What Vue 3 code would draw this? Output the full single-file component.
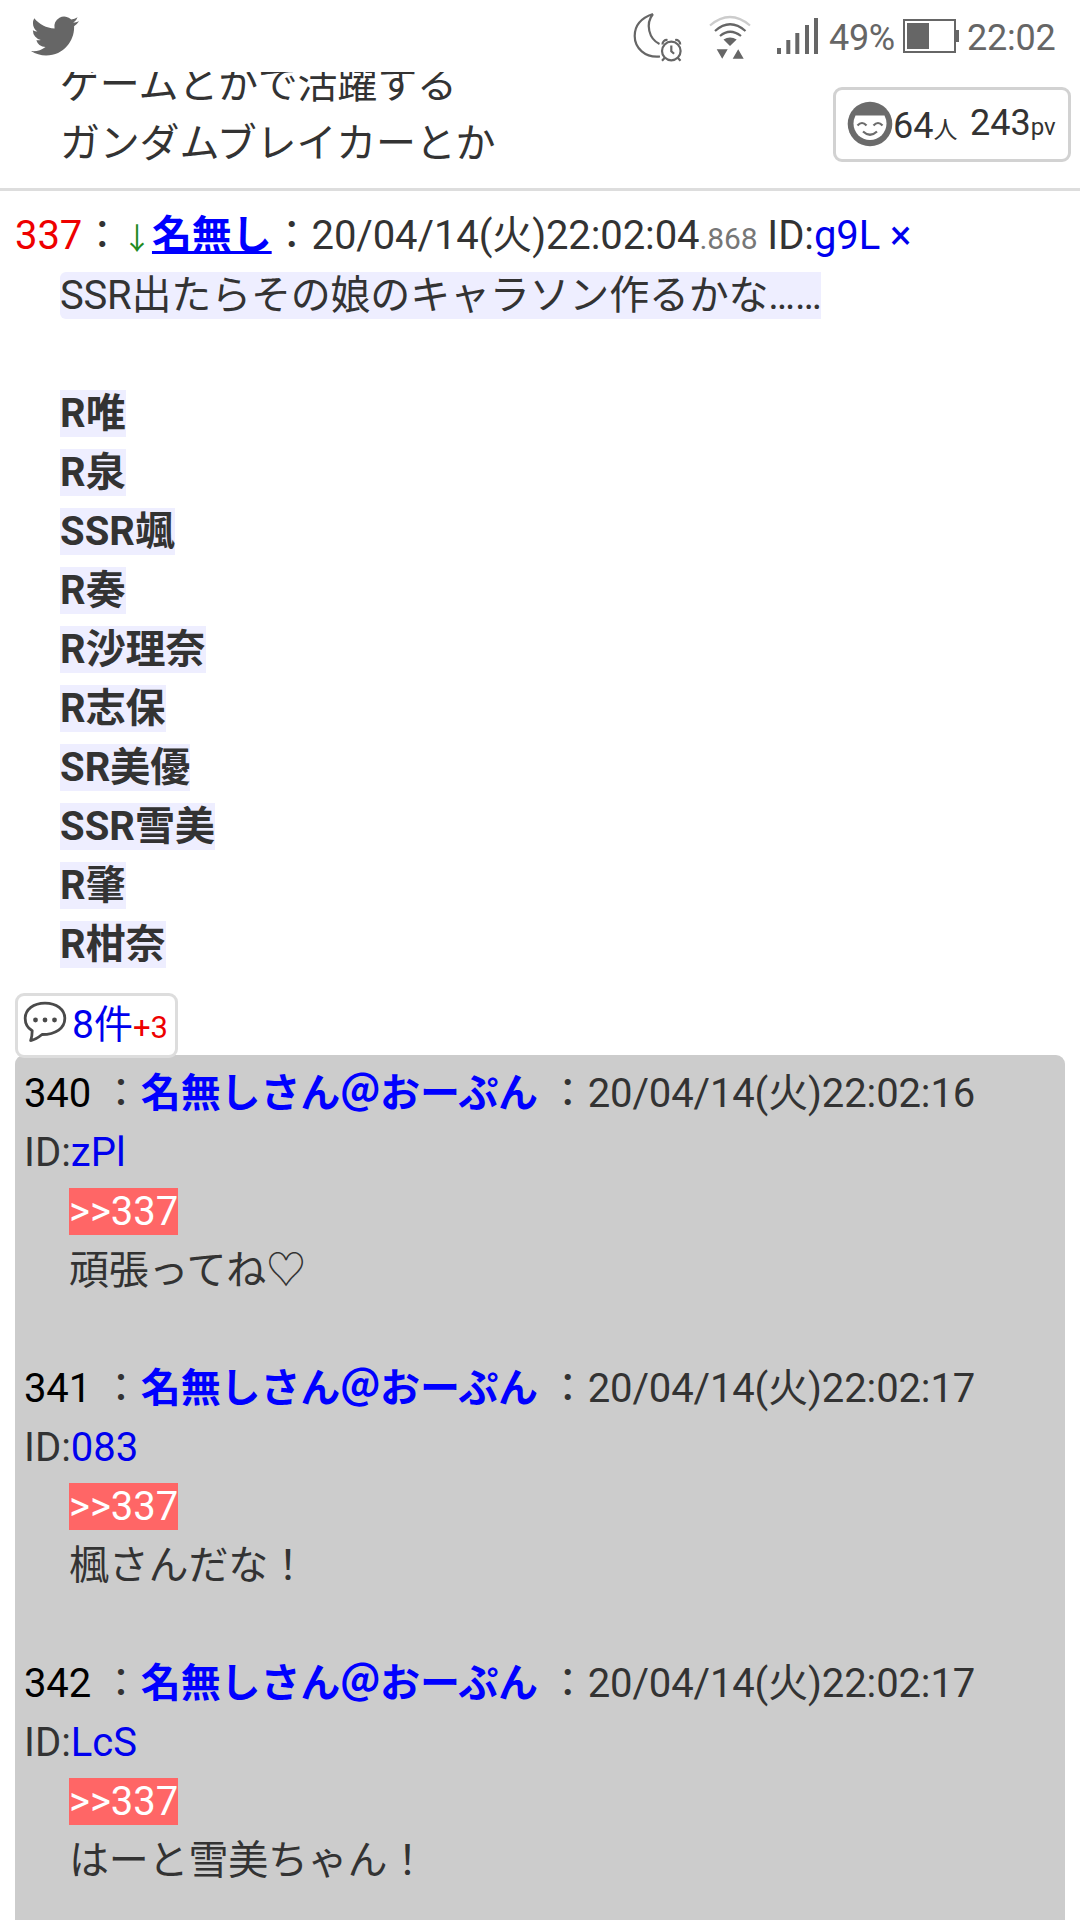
<script setup>
const picks = ['R唯', 'R泉', 'SSR颯', 'R奏', 'R沙理奈', 'R志保', 'SR美優', 'SSR雪美', 'R肇', 'R柑奈']

const replies = [
  { no: 340, time: '22:02:16', id: 'zPl', body: '頑張ってね♡' },
  { no: 341, time: '22:02:17', id: '083', body: '楓さんだな！' },
  { no: 342, time: '22:02:17', id: 'LcS', body: 'はーと雪美ちゃん！' },
]
</script>

<template>
  <div class="screen" lang="ja">
    <header class="status">
      <svg class="bird" viewBox="0 0 24 24" width="48" height="48">
        <path fill="#666" d="M23.953 4.57a10 10 0 01-2.825.775 4.958 4.958 0 002.163-2.723c-.951.555-2.005.959-3.127 1.184a4.92 4.92 0 00-8.384 4.482C7.69 8.095 4.067 6.13 1.64 3.162a4.822 4.822 0 00-.666 2.475c0 1.71.87 3.213 2.188 4.096a4.904 4.904 0 01-2.228-.616v.06a4.923 4.923 0 003.946 4.827 4.996 4.996 0 01-2.212.085 4.936 4.936 0 004.604 3.417 9.867 9.867 0 01-6.102 2.105c-.39 0-.779-.023-1.17-.067a13.995 13.995 0 007.557 2.209c9.053 0 13.998-7.496 13.998-13.985 0-.21 0-.42-.015-.63A9.935 9.935 0 0024 4.59z" />
      </svg>
      <svg class="indicators" viewBox="0 0 190 72" width="190" height="72" fill="none" stroke="#666" stroke-width="2.2">
        <!-- moon with alarm clock -->
        <path d="M23 14C11 18 4.700 26 4.700 36C4.700 48 15 58 30 56.500M23 14C15 24 19 39 29.500 44" />
        <circle cx="41.300" cy="51" r="9.300" />
        <path d="M32.500 44.500a4.300 4.300 0 0 1 5-4.500M50.200 44.500a4.300 4.300 0 0 0-5-4.500M35 57.500l-3 3.200M47.500 57.500l3 3.200M41.300 45.500v5.800l2.800 2.500" />
        <!-- wifi -->
        <path d="M80 25.500Q100 8.500 120 25.500" stroke="#ccc" />
        <path d="M85 31Q100 17.500 115.500 31M90 36Q100 27.500 111 36" />
        <path d="M93.500 39.500Q100 35.500 106.700 39.500L100 46zM86.700 49.300h11l-5.500 9.400zM102.700 58.700h11l-5.500-9.400z" fill="#666" stroke="none" />
        <!-- signal -->
        <path d="M147 48h4v6h-4zM156.300 40h4v14h-4zM165.300 33h4v21h-4zM175 25h4v29h-4zM184 18h4v36h-4z" fill="#666" stroke="none" />
      </svg>
      <span class="percent">49%</span>
      <svg class="battery" viewBox="0 0 56 34" width="56" height="34">
        <path d="M1 1h51v32H1z" fill="none" stroke="#666" stroke-width="2" />
        <path d="M4 4h22v26H4zM53 11h3v12h-3z" fill="#666" />
      </svg>
      <span class="clock">22:02</span>
    </header>

    <section class="previous">
      <div class="previous-text cjk">
        <div class="line">ゲームとかで活躍する</div>
        <div class="line">ガンダムブレイカーとか</div>
      </div>
      <div class="viewers">
        <svg viewBox="0 0 46 46" width="46" height="46">
          <circle cx="23" cy="23" r="22.300" fill="#6b6b6b" />
          <path d="M8.500 14.500h29q2 4 2 8a16.500 16.500 0 0 1-33 0q0-4 2-8z" fill="#fff" />
          <path d="M10.500 24.500q4.500-5 9 0M26.500 24.500q4.500-5 9 0M16 30.500q7 6.500 14 0" fill="none" stroke="#6b6b6b" stroke-width="2.200" />
        </svg>
        <span class="people">64<small>人</small></span>
        <span class="views">243<small>pv</small></span>
      </div>
    </section>

    <article class="post">
      <div class="line head"><span class="num">337</span>：<span class="arrow">↓</span><a class="name link">名無し</a>：20/04/14(火)22:02:04<span class="ms">.868</span> ID:<a class="id">g9L</a> <a class="id">×</a></div>
      <div class="text">
        <div class="line cjk"><span class="mark first">SSR出たらその娘のキャラソン作るかな……</span></div>
        <div class="line blank"></div>
        <div v-for="pick in picks" :key="pick" class="line"><b class="mark">{{ pick }}</b></div>
      </div>
      <div class="count">
        <svg viewBox="0 0 44 42" width="44" height="42">
          <path d="M22 2.200C10.500 2.200 2.200 8.500 2.200 17.500C2.200 23 4.500 27 9.200 29.800C9.200 33.500 8.700 36.500 7.700 39.500C13 38.500 16 36 19 33.500C33 33.500 41.800 27 41.800 17.500C41.800 8.500 33.500 2.200 22 2.200z" fill="none" stroke="#4a4a4a" stroke-width="2.800" stroke-linejoin="round" />
          <g fill="#4a4a4a">
            <circle cx="12.500" cy="19" r="2.400" />
            <circle cx="22" cy="19" r="2.400" />
            <circle cx="31.500" cy="19" r="2.400" />
          </g>
        </svg>
        <span>8件<small>+3</small></span>
      </div>
    </article>

    <section class="replies">
      <div v-for="r in replies" :key="r.no" class="reply">
        <div class="line head-reply"><span class="no">{{ r.no }}</span> ：<b class="name">名無しさん＠おーぷん</b> ：20/04/14(火){{ r.time }}</div>
        <div class="line">ID:<a class="id">{{ r.id }}</a></div>
        <div class="line indent"><a class="anchor">&gt;&gt;337</a></div>
        <div class="line indent cjk">{{ r.body }}</div>
        <div class="line blank"></div>
      </div>
    </section>
  </div>
</template>

<style>
body {
  background: #fff;
}
</style>

<style scoped>
.screen {
  width: 1080px;
  height: 1920px;
  overflow: hidden;
  display: flex;
  flex-direction: column;
  background: #fff;
  color: #333;
  font-family: Roboto, "Noto Sans CJK JP", sans-serif;
  font-size: 40px;
  line-height: 59px;
}
.status {
  flex: none;
  height: 72px;
  display: flex;
  color: #666;
  font-size: 36px;
  line-height: 42px;
}
.bird {
  margin: 12px 0 0 31px;
}
.indicators {
  margin-left: 551px;
}
.percent {
  margin: 17px 0 0 9px;
  width: 74px;
  letter-spacing: -0.3px;
}
.battery {
  margin-top: 19px;
}
.clock {
  margin: 17px 0 0 8px;
  letter-spacing: -0.2px;
}
.previous {
  flex: none;
  height: 119px;
  box-sizing: border-box;
  border-bottom: 3px solid #ddd;
  display: flex;
  justify-content: space-between;
  overflow: hidden;
}
.previous-text {
  margin: -17px 0 0 60px;
}
.line {
  height: 59px;
  white-space: pre;
}
.cjk {
  letter-spacing: -0.2px;
}
.head {
  margin: -1px 0 1px;
  letter-spacing: -0.1px;
}
.head-reply {
  letter-spacing: -0.12px;
}
.viewers {
  box-sizing: border-box;
  width: 238px;
  height: 75px;
  margin: 15px 9px 0 0;
  border: 3px solid #d2d2d2;
  border-radius: 9px;
  padding: 11px 0 0 11px;
  display: flex;
  font-size: 36px;
  line-height: 42px;
}
.viewers svg {
  flex: none;
}
.viewers small {
  font-size: 24px;
}
.people {
  width: 77px;
  margin-top: 4px;
}
.views {
  margin-top: 1px;
}
.post {
  flex: none;
  padding: 16px 0 0 15px;
  height: 848px;
}
.text {
  padding-left: 45px;
  margin-bottom: 19px;
}
.num {
  color: #e00;
}
.arrow {
  color: #228b22;
  font-size: 30px;
}
.name {
  font-weight: bold;
  color: #00f;
}
.link {
  text-decoration: underline;
  text-decoration-thickness: 3px;
  text-decoration-skip-ink: none;
  text-underline-offset: 2px;
}
.id {
  color: #00e;
}
.ms {
  color: #777;
  font-size: 30px;
}
.mark {
  background: #eef;
}
.first {
  border-radius: 6px 0 0 6px;
}
.count {
  position: relative;
  z-index: 1;
  box-sizing: border-box;
  width: 163px;
  height: 65px;
  border: 3px solid #ddd;
  border-radius: 9px;
  background: #fff;
  padding-left: 5px;
  display: flex;
  color: #00e;
  font-size: 39px;
  white-space: nowrap;
}
.count svg {
  flex: none;
  margin-top: 5px;
}
.count span {
  margin: 0 0 0 5px;
}
.count small {
  font-size: 31px;
  color: #e00;
}
.replies {
  flex: none;
  width: 1050px;
  box-sizing: border-box;
  height: 900px;
  margin-left: 15px;
  padding: 9px 9px 0;
  border-radius: 9px;
  background: #ccc;
}
.no {
  color: #000;
}
.indent {
  padding-left: 45px;
}
.anchor {
  background: #f66;
  color: #fff;
}
</style>
